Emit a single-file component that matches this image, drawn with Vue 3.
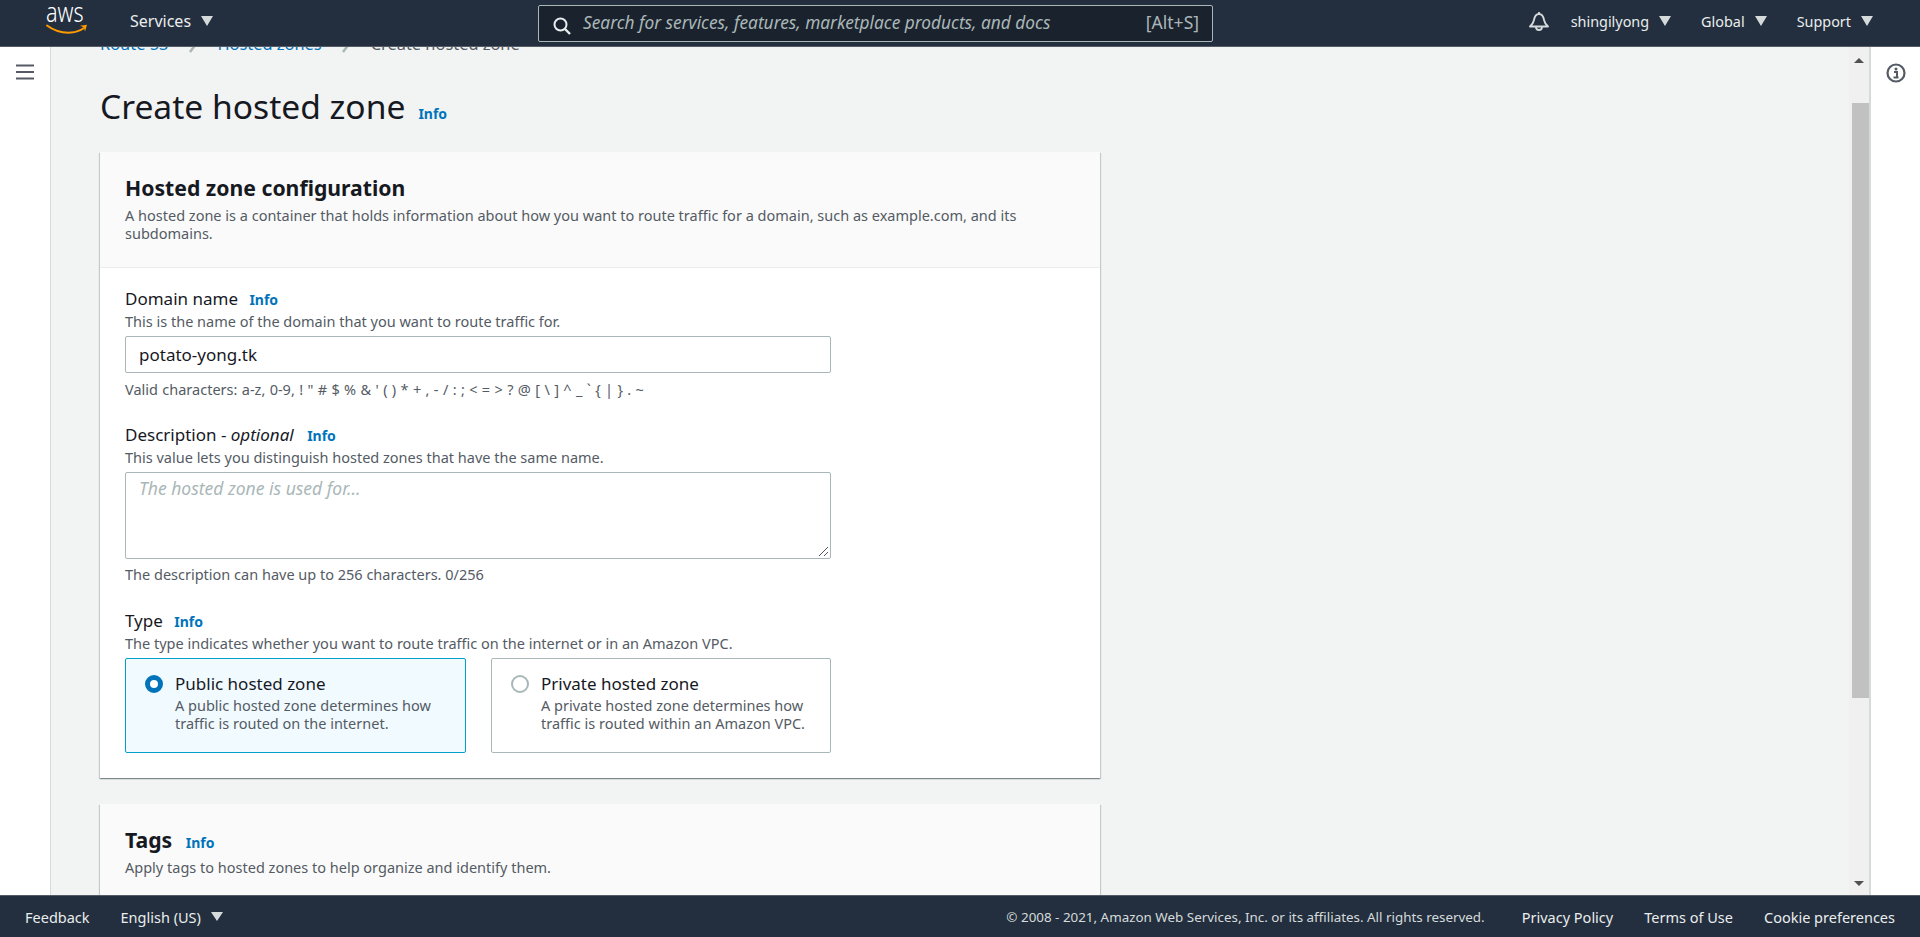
<script setup>
const infoText = 'Info'
</script>

<template>
  <div class="page">
    <header class="top">
      <div class="logo">
        <span class="logo-text">aws</span>
        <svg class="smile" width="42" height="10" viewBox="0 0 42 10">
          <path d="M1 1.500C9 7.500 18 9 25 8.600C30 8.300 34 6.800 38 4" fill="none" stroke="#ff9900" stroke-width="2" stroke-linecap="round" />
          <path d="M34 1.800L41 0.800L39 7.500L38 3.500Z" fill="#ff9900" />
        </svg>
      </div>
      <div class="nav services">Services<i class="caret"></i></div>
      <div class="search">
        <svg width="20" height="20" viewBox="0 0 20 20" class="search-icon">
          <circle cx="8.500" cy="8.500" r="6" fill="none" stroke="#eaeded" stroke-width="2" />
          <path d="M13 13l5 5" stroke="#eaeded" stroke-width="2.400" />
        </svg>
        <span class="search-text">Search for services, features, marketplace products, and docs</span>
        <span class="search-key">[Alt+S]</span>
      </div>
      <div class="top-right">
        <svg class="bell" width="20" height="20" viewBox="0 0 20 20">
          <path d="M10 1v2M10 3C6.500 3 5.500 6 5 9C4.500 12 3 13.500 1 15.500H19C17 13.500 15.500 12 15 9C14.500 6 13.500 3 10 3Z" fill="none" stroke="#d5dbdb" stroke-width="1.800" stroke-linejoin="round" />
          <path d="M7 16a3 3 0 0 0 6 0" fill="none" stroke="#d5dbdb" stroke-width="1.800" />
        </svg>
        <div class="nav">shingilyong<i class="caret"></i></div>
        <div class="nav">Global<i class="caret"></i></div>
        <div class="nav">Support<i class="caret"></i></div>
      </div>
    </header>

    <div class="middle">
      <aside class="rail rail-left">
        <svg width="18" height="16" viewBox="0 0 18 16">
          <path d="M0 1.500h18M0 8h18M0 14.500h18" stroke="#545b64" stroke-width="2.200" />
        </svg>
      </aside>

      <main class="content">
        <nav class="crumbs">
          <span class="crumb-link">Route 53</span>
          <svg class="crumb-sep" width="8" height="18" viewBox="0 0 8 18"><path d="M1 1l6 7-6 8" fill="none" stroke="#aab7b8" stroke-width="2.500" /></svg>
          <span class="crumb-link">Hosted zones</span>
          <svg class="crumb-sep" width="8" height="18" viewBox="0 0 8 18"><path d="M1 1l6 7-6 8" fill="none" stroke="#aab7b8" stroke-width="2.500" /></svg>
          <span class="crumb-now">Create hosted zone</span>
        </nav>

        <div class="title-row">
          <h1>Create hosted zone</h1>
          <a class="info">{{ infoText }}</a>
        </div>

        <section class="card">
          <div class="card-head">
            <h2>Hosted zone configuration</h2>
            <p class="card-desc">A hosted zone is a container that holds information about how you want to route traffic for a domain, such as example.com, and its subdomains.</p>
          </div>
          <div class="card-body">
            <div class="field">
              <div class="label">Domain name <a class="info">{{ infoText }}</a></div>
              <div class="hint">This is the name of the domain that you want to route traffic for.</div>
              <div class="input">potato-yong.tk</div>
              <div class="hint after valid">Valid characters: a-z, 0-9, ! " # $ % &amp; ' ( ) * + , - / : ; &lt; = &gt; ? @ [ \ ] ^ _ ` { | } . ~</div>
            </div>

            <div class="field roomy">
              <div class="label">Description - <em>optional</em> <a class="info wide">{{ infoText }}</a></div>
              <div class="hint">This value lets you distinguish hosted zones that have the same name.</div>
              <div class="textarea">
                <span class="placeholder">The hosted zone is used for...</span>
                <svg class="grip" width="11" height="11" viewBox="0 0 11 11">
                  <path d="M1 10L10 1M6 10L10 6" stroke="#555" stroke-width="1" />
                </svg>
              </div>
              <div class="hint after">The description can have up to 256 characters. 0/256</div>
            </div>

            <div class="field last">
              <div class="label">Type <a class="info">{{ infoText }}</a></div>
              <div class="hint">The type indicates whether you want to route traffic on the internet or in an Amazon VPC.</div>
              <div class="radios">
                <div class="radio-card selected">
                  <span class="dot on"></span>
                  <div>
                    <div class="radio-title">Public hosted zone</div>
                    <div class="radio-desc">A public hosted zone determines how traffic is routed on the internet.</div>
                  </div>
                </div>
                <div class="radio-card">
                  <span class="dot"></span>
                  <div>
                    <div class="radio-title">Private hosted zone</div>
                    <div class="radio-desc">A private hosted zone determines how traffic is routed within an Amazon VPC.</div>
                  </div>
                </div>
              </div>
            </div>
          </div>
        </section>

        <section class="card tags">
          <div class="card-head">
            <h2>Tags <a class="info">{{ infoText }}</a></h2>
            <p class="card-desc">Apply tags to hosted zones to help organize and identify them.</p>
          </div>
          <div class="tags-body"></div>
        </section>
      </main>

      <div class="scrollbar">
        <i class="arrow up"></i>
        <div class="track"><div class="thumb"></div></div>
        <i class="arrow down"></i>
      </div>

      <aside class="rail rail-right">
        <svg width="20" height="20" viewBox="0 0 20 20">
          <circle cx="10" cy="10" r="8.500" fill="none" stroke="#545b64" stroke-width="2.200" />
          <circle cx="10" cy="6" r="1.500" fill="#545b64" />
          <path d="M8 9h3v5M7.500 14.500h5" fill="none" stroke="#545b64" stroke-width="2" />
        </svg>
      </aside>
    </div>

    <footer class="bottom">
      <span class="foot-link">Feedback</span>
      <span class="foot-link lang">English (US)<i class="caret"></i></span>
      <span class="copy">© 2008 - 2021, Amazon Web Services, Inc. or its affiliates. All rights reserved.</span>
      <div class="foot-right">
        <span class="foot-link">Privacy Policy</span>
        <span class="foot-link">Terms of Use</span>
        <span class="foot-link">Cookie preferences</span>
      </div>
    </footer>
  </div>
</template>

<style>
html, body { margin: 0; overflow: hidden; }
</style>

<style scoped>
.page {
  width: 1920px;
  height: 937px;
  display: flex;
  flex-direction: column;
  font-family: "Noto Sans", sans-serif;
  color: #16191f;
  background: #fff;
  overflow: hidden;
}
.top {
  flex: 0 0 47px;
  box-sizing: border-box;
  background: #232f3e;
  border-bottom: 1px solid #545b64;
  display: flex;
  align-items: center;
  color: #eaeded;
  font-size: 14.400px;
  padding-left: 46px;
}
.logo { width: 84px; height: 36px; position: relative; flex: none; }
.logo-text {
  position: absolute;
  left: 0;
  top: -5px;
  font-size: 27px;
  font-weight: 300;
  line-height: 24px;
  color: #fff;
  transform: scaleX(0.8);
  transform-origin: left center;
}
.smile { position: absolute; left: 0; top: 19px; }
.nav { display: flex; align-items: center; white-space: nowrap; padding-bottom: 4px; }
.services { font-size: 16px; flex: 0 0 408px; }
.caret {
  display: inline-block;
  width: 0; height: 0;
  margin-left: 10px;
  border-left: 6px solid transparent;
  border-right: 6px solid transparent;
  border-top: 10px solid #d5dbdb;
}
.search {
  width: 675px;
  height: 37px;
  box-sizing: border-box;
  border: 1px solid #aab7b8;
  border-radius: 2px;
  background: #1a222d;
  display: flex;
  align-items: center;
  padding: 0 13px 2px 13px;
  flex: none;
}
.search-icon { flex: none; margin: 8px 11px 0 0; }
.search-text { font-style: italic; color: #aab7b8; font-size: 17.300px; flex: 1; white-space: nowrap; }
.search-key { color: #aab7b8; font-size: 17.500px; }
.top-right { display: flex; align-items: center; margin-left: auto; padding-right: 47px; }
.top-right .nav { margin-left: 30px; }
.bell { margin: 0 -8px 4px 0; }

.middle { flex: 1; display: flex; min-height: 0; }
.rail { flex: none; width: 50px; background: #fff; display: flex; justify-content: center; align-items: flex-start; box-sizing: content-box; }
.rail-left { border-right: 1px solid #d5dbdb; padding-top: 17px; }
.rail-right { border-left: 2px solid #d5dbdb; padding-top: 16px; width: 49px; }
.content {
  flex: 1;
  min-width: 0;
  background: #f2f3f3;
  padding-left: 49px;
  overflow: hidden;
}
.crumbs {
  display: flex;
  align-items: flex-start;
  gap: 20.500px;
  font-size: 16.400px;
  line-height: 20px;
  margin-top: -13px;
  color: #545b64;
  white-space: nowrap;
}
.crumb-link { color: #0073bb; }
.crumb-sep { flex: none; margin-top: 2px; }
.title-row { display: flex; align-items: baseline; gap: 13px; margin-top: 30px; }
h1 { margin: 0; font-size: 33.600px; line-height: 44px; font-weight: 400; }
.info { color: #0073bb; font-size: 14px; font-weight: 700; margin-left: 7px; line-height: 1; }
.info.wide { margin-left: 9px; }
.title-row .info { margin-left: 0; }
.card {
  width: 1000px;
  box-sizing: border-box;
  background: #fff;
  box-shadow: 0 1px 1px 0 rgba(0,28,36,.3), 1px 1px 1px 0 rgba(0,28,36,.15), -1px 1px 1px 0 rgba(0,28,36,.15);
  margin-top: 24px;
}
.card-head { background: #fafafa; border-bottom: 1px solid #eaeded; padding: 22px 25px 25px; }
h2 { margin: 0 0 4px; font-size: 21.200px; line-height: 28px; font-weight: 700; }
h2 .info { font-size: 14px; }
.card-desc { margin: 0; font-size: 14.500px; line-height: 18px; color: #545b64; width: 950px; }
.card-body { padding: 19px 25px 25px; }
.field { margin-bottom: 24px; }
.field.roomy { margin-bottom: 25px; }
.field.last { margin-bottom: 0; }
.label { font-size: 17px; line-height: 24px; }
.hint { font-size: 14.500px; line-height: 20px; color: #545b64; }
.hint.after { margin-top: 6px; }
.textarea + .hint.after { margin-top: 5px; }
.valid { word-spacing: 0.600px; }
.input, .textarea {
  width: 706px;
  box-sizing: border-box;
  border: 1px solid #aab7b8;
  border-radius: 2px;
  background: #fff;
  margin-top: 5px;
  padding: 0 13px;
  font-size: 17px;
}
.input { height: 37px; line-height: 35px; }
.textarea { height: 87px; line-height: 31px; position: relative; }
.placeholder { font-style: italic; color: #aab7b8; font-size: 17.500px; }
.grip { position: absolute; right: 1px; bottom: 1px; }
.radios { display: flex; gap: 25px; margin-top: 5px; }
.radio-card {
  flex: none;
  width: 340px;
  height: 95px;
  box-sizing: border-box;
  border: 1px solid #aab7b8;
  border-radius: 2px;
  padding: 13px 19px;
  display: flex;
  gap: 12px;
}
.radio-card.selected { width: 341px; border-color: #00a1c9; background: #f1faff; }
.dot {
  flex: none;
  width: 18px; height: 18px;
  box-sizing: border-box;
  margin-top: 3px;
  border-radius: 50%;
  border: 2px solid #aab7b8;
  background: #fff;
}
.dot.on { border: 5px solid #0073bb; }
.radio-title { font-size: 17px; line-height: 24px; }
.radio-desc { font-size: 14.500px; line-height: 18px; color: #545b64; width: 270px; }
.tags { margin-top: 26px; }
.tags h2 .info { margin-left: 8px; }
.tags-body { height: 80px; }

.scrollbar {
  flex: none;
  width: 20px;
  margin-left: -1px;
  background: #f0f0f0;
  display: flex;
  flex-direction: column;
  align-items: center;
  padding: 11px 0 9px;
  box-sizing: border-box;
}
.arrow { width: 0; height: 0; border-left: 5px solid transparent; border-right: 5px solid transparent; flex: none; }
.arrow.up { border-bottom: 5px solid #505050; }
.arrow.down { border-top: 5px solid #505050; }
.track { flex: 1; width: 100%; display: flex; justify-content: flex-end; padding-top: 40px; box-sizing: border-box; }
.thumb { width: 17px; height: 595px; background: #c1c1c1; }

.bottom {
  flex: 0 0 42px;
  box-sizing: border-box;
  background: #232f3e;
  border-top: 1px solid #545b64;
  display: flex;
  align-items: center;
  padding: 0 25px;
  color: #eaeded;
  font-size: 14.500px;
  white-space: nowrap;
}
.lang { margin-left: 31px; display: flex; align-items: center; }
.lang .caret { border-top-width: 9px; }
.copy { margin-left: auto; margin-right: 37px; color: #d5dbdb; font-size: 13.400px; }
.foot-right { display: flex; gap: 31px; font-size: 14.500px; }
</style>
